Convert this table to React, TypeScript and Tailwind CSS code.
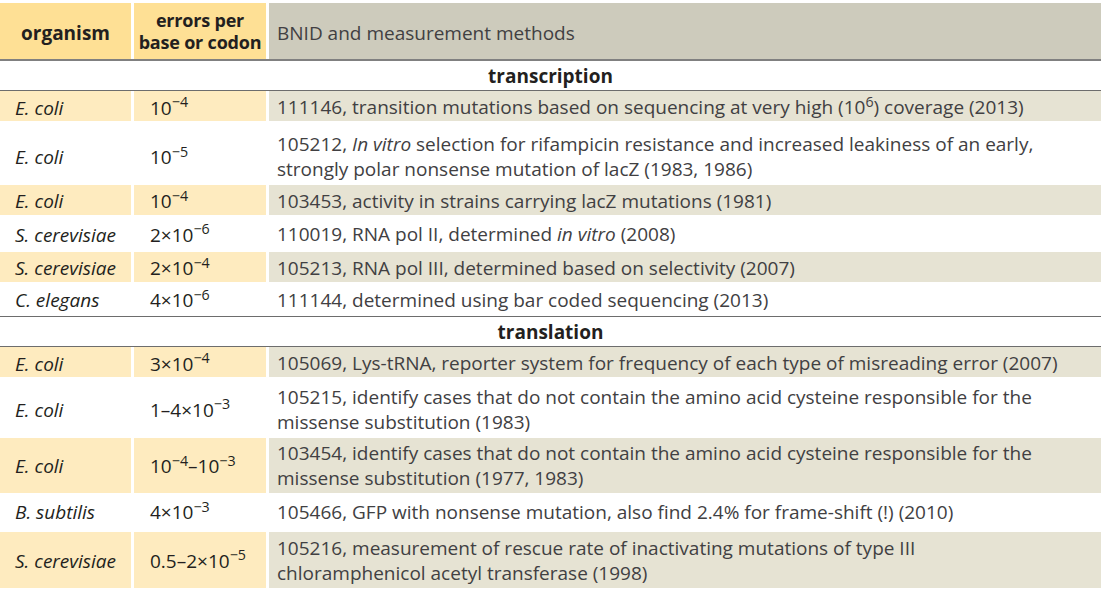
import type { ReactNode } from "react";

type Row = {
  organism: string;
  value: ReactNode;
  desc: ReactNode;
  shaded: boolean;
  h: string;
  pad?: string;
};

const e = (n: string) => <sup>{n}</sup>;

const transcription: Row[] = [
  {
    organism: "E. coli",
    value: <>10{e("−4")}</>,
    desc: <>111146, transition mutations based on sequencing at very high (10{e("6")}) coverage (2013)</>,
    shaded: true,
    h: "h-[30px] mb-[2px]",
    pad: "pt-[3px]",
  },
  {
    organism: "E. coli",
    value: <>10{e("−5")}</>,
    desc: (
      <>
        105212, <i>In vitro</i> selection for rifampicin resistance and increased leakiness of an early,
        <br />
        strongly polar nonsense mutation of lacZ (1983, 1986)
      </>
    ),
    shaded: false,
    h: "h-[62px]",
    pad: "pt-[6px]",
  },
  {
    organism: "E. coli",
    value: <>10{e("−4")}</>,
    desc: <>103453, activity in strains carrying lacZ mutations (1981)</>,
    shaded: true,
    h: "h-[30px] mb-[2px]",
    pad: "pt-[2px]",
  },
  {
    organism: "S. cerevisiae",
    value: <>2×10{e("−6")}</>,
    desc: (
      <>
        110019, RNA pol II, determined <i>in vitro</i> (2008)
      </>
    ),
    shaded: false,
    h: "h-[35px]",
  },
  {
    organism: "S. cerevisiae",
    value: <>2×10{e("−4")}</>,
    desc: <>105213, RNA pol III, determined based on selectivity (2007)</>,
    shaded: true,
    h: "h-[30px] mb-[2px]",
    pad: "pt-[2px]",
  },
  {
    organism: "C. elegans",
    value: <>4×10{e("−6")}</>,
    desc: <>111144, determined using bar coded sequencing (2013)</>,
    shaded: false,
    h: "h-[32px]",
  },
];

const translation: Row[] = [
  {
    organism: "E. coli",
    value: <>3×10{e("−4")}</>,
    desc: <>105069, Lys-tRNA, reporter system for frequency of each type of misreading error (2007)</>,
    shaded: true,
    h: "h-[30px] mb-[2px]",
    pad: "pt-[3px]",
  },
  {
    organism: "E. coli",
    value: <>1–4×10{e("−3")}</>,
    desc: (
      <>
        105215, identify cases that do not contain the amino acid cysteine responsible for the
        <br />
        missense substitution (1983)
      </>
    ),
    shaded: false,
    h: "h-[59px]",
    pad: "pt-[2px]",
  },
  {
    organism: "E. coli",
    value: (
      <>
        10{e("−4")}–10{e("−3")}
      </>
    ),
    desc: (
      <>
        103454, identify cases that do not contain the amino acid cysteine responsible for the
        <br />
        missense substitution (1977, 1983)
      </>
    ),
    shaded: true,
    h: "h-[55px] mb-[2px]",
    pad: "pt-[1px]",
  },
  {
    organism: "B. subtilis",
    value: <>4×10{e("−3")}</>,
    desc: <>105466, GFP with nonsense mutation, also find 2.4% for frame-shift (!) (2010)</>,
    shaded: false,
    h: "h-[37px]",
    pad: "pb-[3px]",
  },
  {
    organism: "S. cerevisiae",
    value: <>0.5–2×10{e("−5")}</>,
    desc: (
      <>
        105216, measurement of rescue rate of inactivating mutations of type III
        <br />
        chloramphenicol acetyl transferase (1998)
      </>
    ),
    shaded: true,
    h: "h-[56px]",
    pad: "pt-[1px]",
  },
];

function DataRow({ row }: { row: Row }) {
  const yellow = row.shaded ? "bg-[#feebbf]" : "";
  const gray = row.shaded ? "bg-[#e6e3d3]" : "";
  const pad = row.pad ?? "";
  return (
    <div className={`flex gap-[3px] ${row.h}`}>
      <div className={`w-[131px] shrink-0 flex items-center pl-[15px] ${pad} italic text-[#231f20] ${yellow}`}>
        {row.organism}
      </div>
      <div className={`w-[132px] shrink-0 flex items-center pl-[16px] ${pad} text-[#231f20] ${yellow}`}>
        <span>{row.value}</span>
      </div>
      <div className={`flex-1 flex items-center pl-[8px] ${pad} text-[#414042] leading-[25px] ${gray}`}>
        <span>{row.desc}</span>
      </div>
    </div>
  );
}

function Section({ title }: { title: string }) {
  return (
    <div className="h-[30px] flex items-center justify-center font-bold text-[#231f20] border-b border-[#6d6d6d]">
      {title}
    </div>
  );
}

export default function App() {
  return (
    <div className="w-[1103px] h-[595px] bg-white overflow-hidden pt-[3px] pr-[2px] font-['Open_Sans',sans-serif] text-[19px] leading-[24px]">
      <div className="flex gap-[3px] h-[56px]">
        <div className="w-[131px] shrink-0 bg-[#fee095] flex items-center justify-center pt-[3px] font-bold text-[#231f20]">
          organism
        </div>
        <div className="w-[132px] shrink-0 bg-[#fee095] flex items-center justify-center text-center font-bold text-[#231f20] text-[18px] leading-[22px] tracking-[-0.2px]">
          errors per
          <br />
          base or codon
        </div>
        <div className="flex-1 bg-[#cdcbbc] flex items-center pl-[8px] pt-[3px] text-[#414042]">
          BNID and measurement methods
        </div>
      </div>
      <div className="h-[2px] bg-[#808080]" />
      <Section title="transcription" />
      {transcription.map((r, i) => (
        <DataRow key={i} row={r} />
      ))}
      <div className="h-px bg-[#6d6d6d]" />
      <Section title="translation" />
      {translation.map((r, i) => (
        <DataRow key={i} row={r} />
      ))}
    </div>
  );
}
